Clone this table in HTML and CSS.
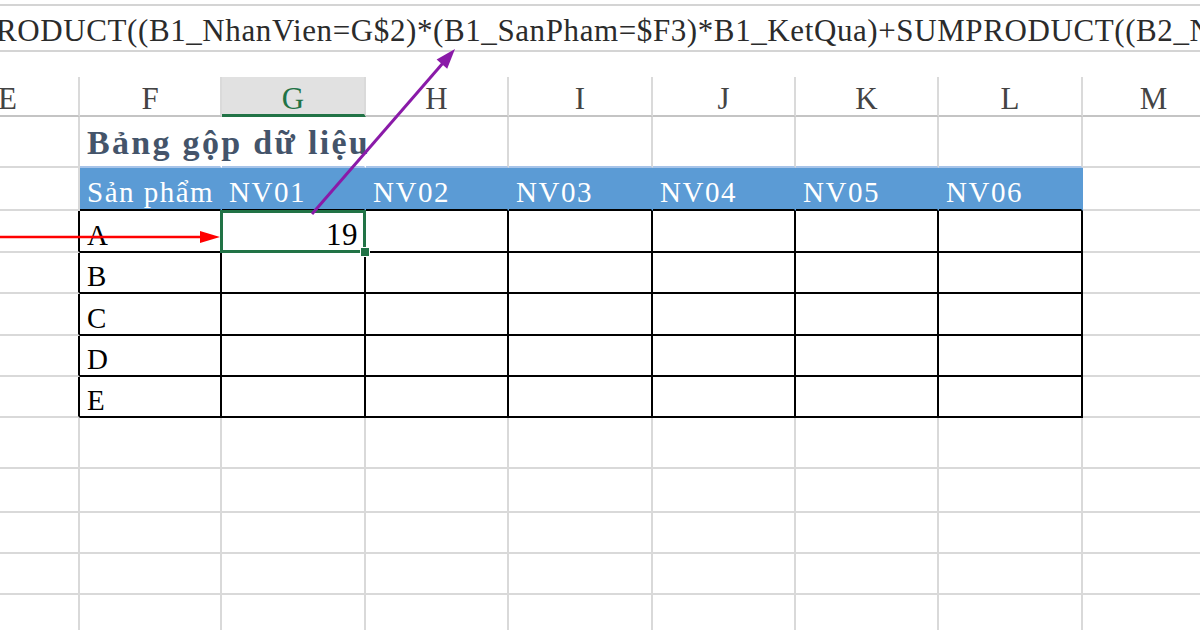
FILE: index.html
```html
<!DOCTYPE html>
<html lang="vi">
<head>
<meta charset="utf-8">
<title>Bảng gộp dữ liệu</title>
<link rel="stylesheet" href="styles.css">
</head>
<body>
<div class="page">
  <div class="formula-bar"><span class="formula">RODUCT((B1_NhanVien=G$2)*(B1_SanPham=$F3)*B1_KetQua)+SUMPRODUCT((B2_NhanVien=G$2)*(B2_SanPham=$F3)*B2_KetQua)</span></div>
  <div class="sheet">
    <!-- column headers -->
    <div class="c ch">E</div>
    <div class="c ch">F</div>
    <div class="c ch ch-sel">G</div>
    <div class="c ch">H</div>
    <div class="c ch">I</div>
    <div class="c ch">J</div>
    <div class="c ch">K</div>
    <div class="c ch">L</div>
    <div class="c ch">M</div>

    <!-- title row -->
    <div class="c"></div>
    <div class="c tr noline"><span class="title">Bảng gộp dữ liệu</span></div>
    <div class="c tr noline"></div>
    <div class="c tr"></div>
    <div class="c tr"></div>
    <div class="c tr"></div>
    <div class="c tr"></div>
    <div class="c tr"></div>
    <div class="c"></div>

    <!-- blue header row -->
    <div class="c"></div>
    <div class="c hd">Sản phẩm</div>
    <div class="c hd">NV01</div>
    <div class="c hd">NV02</div>
    <div class="c hd">NV03</div>
    <div class="c hd">NV04</div>
    <div class="c hd">NV05</div>
    <div class="c hd">NV06</div>
    <div class="c"></div>

    <!-- data rows -->
    <div class="c tl"></div>
    <div class="c t">A</div>
    <div class="c t sel"><span class="num">19</span></div>
    <div class="c t"></div>
    <div class="c t"></div>
    <div class="c t"></div>
    <div class="c t"></div>
    <div class="c t"></div>
    <div class="c"></div>

    <div class="c tl"></div>
    <div class="c t">B</div>
    <div class="c t"></div>
    <div class="c t"></div>
    <div class="c t"></div>
    <div class="c t"></div>
    <div class="c t"></div>
    <div class="c t"></div>
    <div class="c"></div>

    <div class="c tl"></div>
    <div class="c t">C</div>
    <div class="c t"></div>
    <div class="c t"></div>
    <div class="c t"></div>
    <div class="c t"></div>
    <div class="c t"></div>
    <div class="c t"></div>
    <div class="c"></div>

    <div class="c tl"></div>
    <div class="c t">D</div>
    <div class="c t"></div>
    <div class="c t"></div>
    <div class="c t"></div>
    <div class="c t"></div>
    <div class="c t"></div>
    <div class="c t"></div>
    <div class="c"></div>

    <div class="c tl"></div>
    <div class="c t">E</div>
    <div class="c t"></div>
    <div class="c t"></div>
    <div class="c t"></div>
    <div class="c t"></div>
    <div class="c t"></div>
    <div class="c t"></div>
    <div class="c"></div>

    <!-- empty rows -->
    <div class="c"></div><div class="c"></div><div class="c"></div><div class="c"></div><div class="c"></div><div class="c"></div><div class="c"></div><div class="c"></div><div class="c"></div>
    <div class="c"></div><div class="c"></div><div class="c"></div><div class="c"></div><div class="c"></div><div class="c"></div><div class="c"></div><div class="c"></div><div class="c"></div>
    <div class="c"></div><div class="c"></div><div class="c"></div><div class="c"></div><div class="c"></div><div class="c"></div><div class="c"></div><div class="c"></div><div class="c"></div>
    <div class="c"></div><div class="c"></div><div class="c"></div><div class="c"></div><div class="c"></div><div class="c"></div><div class="c"></div><div class="c"></div><div class="c"></div>
    <div class="c"></div><div class="c"></div><div class="c"></div><div class="c"></div><div class="c"></div><div class="c"></div><div class="c"></div><div class="c"></div><div class="c"></div>
  </div>

  <svg class="arrows" width="1200" height="630" viewBox="0 0 1200 630" aria-hidden="true">
    <line x1="0" y1="237" x2="204" y2="237" stroke="#ff0000" stroke-width="2.5"/>
    <polygon points="200,231 220,237 200,243" fill="#ff0000"/>
    <line x1="312" y1="214" x2="443" y2="63" stroke="#8a1aa8" stroke-width="3"/>
    <polygon points="455,49 447.2,68.7 436.6,59.5" fill="#8a1aa8"/>
  </svg>
</div>
</body>
</html>
```

FILE: styles.css
```css
* {
  box-sizing: border-box;
}

html, body {
  margin: 0;
  padding: 0;
  background: #ffffff;
}

body {
  width: 1200px;
  height: 630px;
  overflow: hidden;
  font-family: "Liberation Serif", "Times New Roman", serif;
  color: #000;
}

.page {
  position: relative;
  width: 1200px;
  height: 630px;
  overflow: hidden;
}

.formula-bar {
  margin-top: 4px;
  height: 48px;
  border-top: 2px solid #d4d4d4;
  border-bottom: 2px solid #d4d4d4;
  padding-top: 9px;
  white-space: nowrap;
  overflow: hidden;
  font-size: 31px;
  letter-spacing: 0.6px;
  line-height: 1;
  color: #2b2b2b;
}

.formula {
  display: inline-block;
  margin-left: -4px;
}

.sheet {
  margin-top: 25px;
  margin-left: -63px;
  display: grid;
  grid-template-columns: 143px 142px 144px 143px 144px 143px 143px 144px 143px;
  grid-template-rows: 40px 51px 43px 42px 41px 42px 41px 41px 51px 44px 41px 41px 41px;
}

.c {
  display: flex;
  align-items: flex-end;
  border-right: 2px solid #d9d9d9;
  border-bottom: 2px solid #d9d9d9;
  padding: 0 7px 1px;
  font-size: 29px;
  letter-spacing: 1.2px;
  line-height: 1;
  white-space: nowrap;
  min-width: 0;
}

/* column header letters */
.ch {
  justify-content: center;
  font-size: 31px;
  letter-spacing: 0;
  color: #444444;
  border-right-color: #dadada;
  border-bottom-color: #c4c4c4;
  padding-bottom: 1px;
}

.ch-sel {
  background: #e1e1e1;
  color: #217346;
  border-bottom: 3px solid #217346;
  padding-bottom: 0;
}

/* title row */
.tr {
  border-bottom-color: #a7c4e9;
  padding-bottom: 6px;
}

.noline {
  border-right-color: transparent;
  overflow: visible;
}

.title {
  font-size: 34px;
  letter-spacing: 2.3px;
  font-weight: bold;
  color: #44546a;
}

/* blue header row */
.hd {
  background: #5b9bd5;
  color: #ffffff;
  letter-spacing: 1.5px;
  border-right-color: transparent;
  border-bottom-color: #000000;
  padding-bottom: 2px;
}

/* table body */
.t {
  border-right-color: #000000;
  border-bottom-color: #000000;
}

.tl {
  border-right-color: #000000;
}

.sel {
  position: relative;
  justify-content: flex-end;
  padding-right: 6px;
}

.sel::after {
  content: "";
  position: absolute;
  left: -2px;
  top: -1px;
  right: -2px;
  bottom: -2px;
  border: 3px solid #217346;
}

.sel::before {
  content: "";
  position: absolute;
  right: -6px;
  bottom: -6px;
  width: 8px;
  height: 8px;
  background: #217346;
  border: 1px solid #ffffff;
  z-index: 1;
}

.num {
  font-size: 31px;
  letter-spacing: 0.5px;
}

.arrows {
  position: absolute;
  left: 0;
  top: 0;
  pointer-events: none;
}
```
